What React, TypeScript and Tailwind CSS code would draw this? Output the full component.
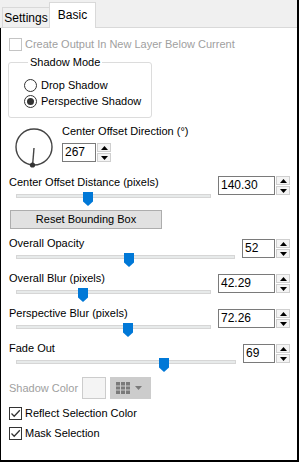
import React from 'react'

type SpinProps = { value: string; width: string }

const Arrow = ({ up }: { up?: boolean }) => (
  <svg width="7" height="4" viewBox="0 0 7 4">
    <path d={up ? 'M0 4L3.5 0L7 4Z' : 'M0 0L7 0L3.5 4Z'} fill="#000" />
  </svg>
)

const Spin = ({ value, width }: SpinProps) => (
  <div className="flex h-[19px]">
    <div className={`${width} h-full border border-[#7a7a7a] bg-white pl-[2px] text-[12px] leading-[17px] text-black`}>
      {value}
    </div>
    <div className="ml-[1px] flex w-[14px] flex-col gap-[1px]">
      <div className="flex flex-1 items-center justify-center border border-[#cfcfcf] bg-[#f4f4f4]">
        <Arrow up />
      </div>
      <div className="flex flex-1 items-center justify-center border border-[#cfcfcf] bg-[#f4f4f4]">
        <Arrow />
      </div>
    </div>
  </div>
)

const Slider = ({ pos }: { pos: number }) => (
  <div className="relative ml-[7px] h-[18px]">
    <div className="absolute left-0 right-0 top-[5px] h-[4px] border border-[#d6d6d6] bg-[#e7eaea]" />
    <svg className="absolute top-[3px]" style={{ left: pos }} width="10" height="14" viewBox="0 0 10 14">
      <path d="M0 0H10V9.5L5 14L0 9.5Z" fill="#0078d7" />
    </svg>
  </div>
)

type RowProps = { label: string; value: string; spinW: string; pos: number; top?: string }

const SliderRow = ({ label, value, spinW, pos, top = 'mt-[3px]' }: RowProps) => (
  <div className="flex h-[35px]">
    <div className="flex flex-1 flex-col pr-[7px]">
      <div className="h-[14px] leading-[14px]">{label}</div>
      <Slider pos={pos} />
    </div>
    <div className={top}>
      <Spin value={value} width={spinW} />
    </div>
  </div>
)

const CheckBox = ({ checked, disabled }: { checked?: boolean; disabled?: boolean }) => (
  <div className={`flex h-[13px] w-[13px] items-center justify-center border bg-white ${disabled ? 'border-[#c4c4c4]' : 'border-[#333333]'}`}>
    {checked && (
      <svg width="11" height="11" viewBox="0 0 11 11">
        <path d="M1.5 5.5L4.2 8.2L9.8 2.2" stroke="#333" strokeWidth="1.3" fill="none" />
      </svg>
    )}
  </div>
)

const Radio = ({ checked }: { checked?: boolean }) => (
  <div className="flex h-[13px] w-[13px] items-center justify-center rounded-full border border-[#333333] bg-white">
    {checked && <div className="h-[7px] w-[7px] rounded-full bg-[#333333]" />}
  </div>
)

export default function App() {
  return (
    <div className="flex h-[462px] w-[299px] flex-col border-r-2 border-black bg-white font-['Liberation_Sans',Arial,sans-serif] text-[11px] text-black">
      <div className="flex h-[28px] items-end border-b border-[#d9d9d9] bg-[#f0f0f0] pl-[2px]">
        <div className="flex h-[20px] w-[48px] items-center justify-center border border-b-0 border-[#d9d9d9] bg-[#f0f0f0] text-[12px]">
          Settings
        </div>
        <div className="-mb-px -ml-px flex h-[26px] w-[47px] items-center justify-center border border-b-0 border-[#d9d9d9] bg-white pb-[2px] text-[12px]">
          Basic
        </div>
      </div>

      <div className="flex flex-1 flex-col border-b-2 border-l border-black pl-[8px] pr-[7px]">
        <div className="mt-[10px] flex h-[13px] items-center gap-[3px]">
          <CheckBox disabled />
          <span className="text-[#a0a0a0]">Create Output In New Layer Below Current</span>
        </div>

        <fieldset className="mt-[4px] -ml-px w-[144px] rounded-[3px] border border-[#dcdcdc] pb-[8px] pl-[15px]">
          <legend className="ml-[4px] px-[2px] leading-[14px]">Shadow Mode</legend>
          <div className="mt-[8px] flex h-[16px] items-center gap-[4px]">
            <Radio />
            <span>Drop Shadow</span>
          </div>
          <div className="flex h-[16px] items-center gap-[4px]">
            <Radio checked />
            <span>Perspective Shadow</span>
          </div>
        </fieldset>

        <div className="mt-[6px] flex">
          <svg className="ml-[4px]" width="42" height="45" viewBox="0 0 42 45">
            <circle cx="21" cy="23" r="18" stroke="#444" strokeWidth="1.4" fill="none" />
            <line x1="21" y1="24" x2="19.6" y2="41" stroke="#444" strokeWidth="1.4" />
            <circle cx="19.5" cy="41" r="2.6" fill="#333" />
          </svg>
          <div className="ml-[7px] flex flex-col">
            <div className="h-[14px] leading-[14px]">Center Offset Direction (°)</div>
            <div className="mt-[5px]">
              <Spin value="267" width="w-[34px]" />
            </div>
          </div>
        </div>

        <div className="mt-[6px]">
          <SliderRow label="Center Offset Distance (pixels)" value="140.30" spinW="w-[57px]" pos={67} top="mt-[1px]" />
        </div>

        <button className="ml-[1px] h-[19px] w-[152px] border border-[#adadad] bg-[#e1e1e1] text-[11px]">
          Reset Bounding Box
        </button>

        <div className="mt-[7px] flex flex-col">
          <SliderRow label="Overall Opacity" value="52" spinW="w-[33px]" pos={108} />
          <SliderRow label="Overall Blur (pixels)" value="42.29" spinW="w-[57px]" pos={62} />
          <SliderRow label="Perspective Blur (pixels)" value="72.26" spinW="w-[57px]" pos={107} />
          <SliderRow label="Fade Out" value="69" spinW="w-[32px]" pos={143} />
        </div>

        <div className="mt-[1px] flex h-[22px] items-center">
          <span className="w-[73px] text-[#a0a0a0]">Shadow Color</span>
          <div className="h-[22px] w-[24px] border border-[#cccccc] bg-[#f4f4f4]" />
          <div className="ml-[4px] flex h-[22px] w-[41px] items-center gap-[5px] bg-[#cccccc] pl-[6px]">
            <svg width="14" height="12" viewBox="0 0 14 12">
              <rect x="0" y="0" width="14" height="12" fill="#7a7a7a" />
              <path d="M4.5 0V12M9.5 0V12M0 4H14M0 8H14" stroke="#cccccc" strokeWidth="1" />
            </svg>
            <svg width="7" height="4" viewBox="0 0 7 4">
              <path d="M0 0L7 0L3.5 4Z" fill="#7a7a7a" />
            </svg>
          </div>
        </div>

        <div className="mt-[4px] flex h-[20px] items-center gap-[3px]">
          <CheckBox checked />
          <span>Reflect Selection Color</span>
        </div>
        <div className="flex h-[20px] items-center gap-[3px]">
          <CheckBox checked />
          <span>Mask Selection</span>
        </div>
      </div>
    </div>
  )
}
